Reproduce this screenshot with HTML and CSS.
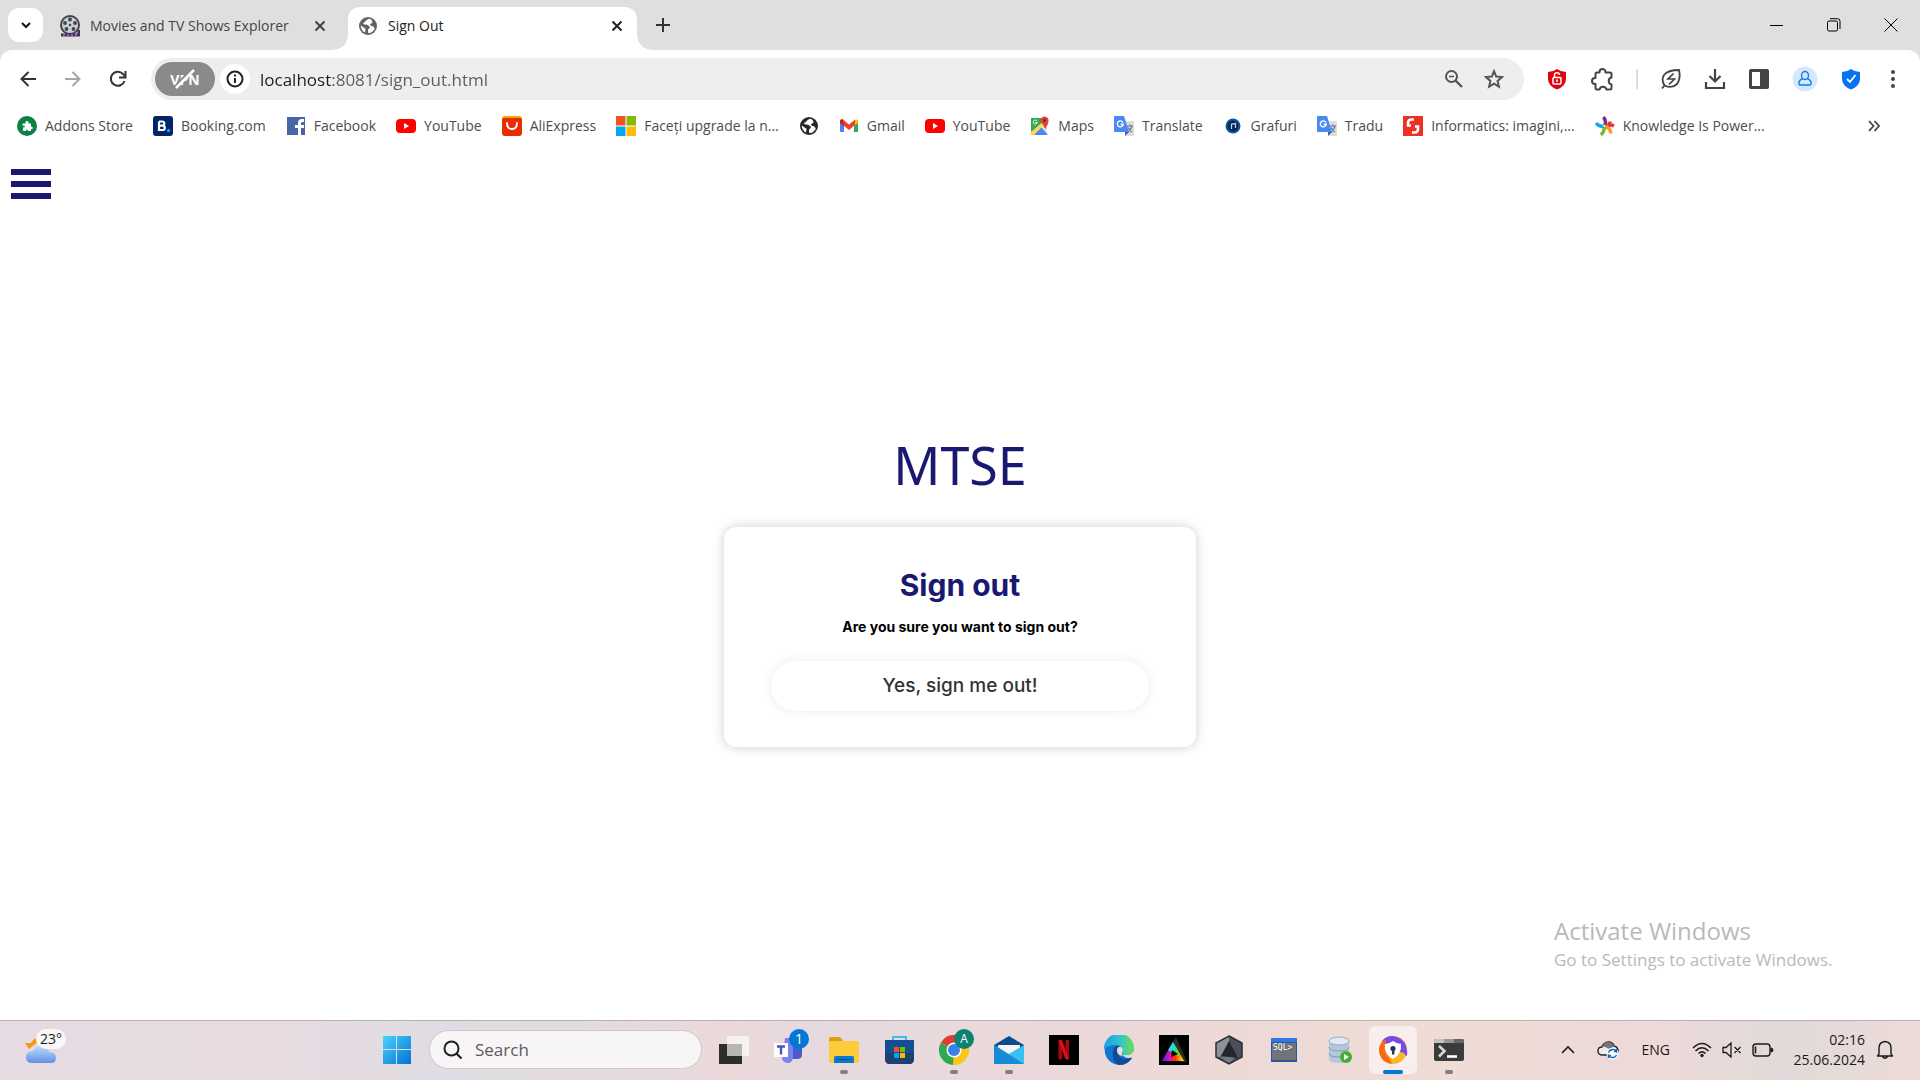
FILE: index.html
```html
<!DOCTYPE html>
<html lang="en">
<head>
<meta charset="utf-8">
<title>Sign Out</title>
<link rel="stylesheet" href="styles.css">
</head>
<body>
<svg class="defs" width="0" height="0" aria-hidden="true">
  <defs>
    <symbol id="youtube" viewBox="0 0 20 20"><rect y="3" width="20" height="14" rx="4" fill="#f00"/><path d="M8 7l5 3-5 3z" fill="#fff"/></symbol>
    <symbol id="translate" viewBox="0 0 20 20"><path d="M8 5h11q1 0 1 1v13q0 1-1 1h-7z" fill="#dcdcdc"/><path d="M1 0h9l5 16H1q-1 0-1-1V1q0-1 1-1z" fill="#4a89f3"/><path d="M11 16h4l-4 4z" fill="#3761b8"/><path d="M9 6.500A3 3 0 1 0 9.300 8.200H6.700" fill="none" stroke="#fff" stroke-width="1.400"/><path d="M13 10h6M16 8.500V10M18 10q-1 4-4 6M14 11.500q1.500 3 4 4.500" fill="none" stroke="#607988" stroke-width="1.200"/></symbol>
    <symbol id="globe" viewBox="0 0 20 20"><circle cx="10" cy="10" r="9" fill="currentColor"/><path d="M11.500 2.800c-2 .2-2 1.400-3.400 1.700-1.200.3-.7 1.900-2.200 2.100-1 .2-1 1.600.4 1.800 2 .2 3.700-.2 4.300 1.300.3.900 1.300.3 1.400 1.500.1 1.300-1.900 1.300-1.900 2.700 0 1.500-.3 2.100.4 3.200 3-.1 5.700-2.200 6.300-5.100-1-.2-1-1.600-2-1.800-1.700-.2-2.600-.4-2.700-1.600-.1-1.500 2.300-1 2.300-2.700 0-1.100-1.500-2.500-2.900-3.100z" fill="#fff"/><path d="M2.700 9.500l4.800 3.200-.4 3.900c-2.600-1.300-4.300-3.800-4.400-7.100z" fill="#fff"/></symbol>
  </defs>
</svg>

<header class="browser">
  <div class="tabstrip">
    <button class="tab-search" aria-label="Search tabs"><svg width="12" height="12" viewBox="0 0 12 12"><path d="M2 4l4 4 4-4" fill="none" stroke="#111" stroke-width="2"/></svg></button>
    <div class="tab">
      <svg width="20" height="22" viewBox="0 0 20 22"><circle cx="10" cy="10" r="9" fill="#c3d0d8" stroke="#45434c" stroke-width="2"/><g fill="#45434c"><circle cx="10" cy="4.500" r="1.900"/><circle cx="15" cy="8" r="1.900"/><circle cx="13.500" cy="14" r="1.900"/><circle cx="6.500" cy="14" r="1.900"/><circle cx="5" cy="8" r="1.900"/><circle cx="10" cy="10" r="1.300"/></g><path d="M1 20h18v-5" fill="none" stroke="#4a2a62" stroke-width="3"/><path d="M3 20h2m2 0h2m2 0h2m2 0h2" stroke="#d4a4e4"/></svg>
      <span class="tab-title">Movies and TV Shows Explorer</span>
      <button class="tab-close" aria-label="Close tab"><svg width="12" height="12" viewBox="0 0 12 12"><path d="M1.500 1.500l9 9M10.500 1.500l-9 9" stroke="#444" stroke-width="2"/></svg></button>
    </div>
    <div class="tab tab-active">
      <svg class="grey" width="20" height="20"><use href="#globe"/></svg>
      <span class="tab-title">Sign Out</span>
      <button class="tab-close" aria-label="Close tab"><svg width="12" height="12" viewBox="0 0 12 12"><path d="M1.500 1.500l9 9M10.500 1.500l-9 9" stroke="#222" stroke-width="2"/></svg></button>
    </div>
    <button class="new-tab" aria-label="New tab"><svg width="14" height="14" viewBox="0 0 14 14"><path d="M7 0v14M0 7h14" stroke="#333" stroke-width="2"/></svg></button>
    <div class="window-controls">
      <button aria-label="Minimize"><svg width="14" height="14" viewBox="0 0 14 14"><path d="M0 7.500h13" stroke="#000"/></svg></button>
      <button aria-label="Restore"><svg width="14" height="14" viewBox="0 0 14 14"><rect x=".5" y="3" width="10" height="10" rx="1.500" fill="none" stroke="#000"/><path d="M3 .7h7.500q2.500 0 2.500 2.500V11" fill="none" stroke="#000"/></svg></button>
      <button aria-label="Close window"><svg width="14" height="14" viewBox="0 0 14 14"><path d="M.5.5l13 13M13.500.5l-13 13" stroke="#000"/></svg></button>
    </div>
  </div>

  <div class="toolbar">
    <nav class="nav-buttons" aria-label="History">
      <button aria-label="Back"><svg width="18" height="18" viewBox="0 0 18 18"><path d="M17 9H3M9.500 2L2.500 9l7 7" fill="none" stroke="#333" stroke-width="2"/></svg></button>
      <button aria-label="Forward"><svg width="18" height="18" viewBox="0 0 18 18"><path d="M1 9h14M8.500 2l7 7-7 7" fill="none" stroke="#a5a5a5" stroke-width="2"/></svg></button>
      <button aria-label="Reload"><svg width="18" height="18" viewBox="0 0 18 18"><path d="M15.500 11A7 7 0 1 1 14 4l2 2.500" fill="none" stroke="#333" stroke-width="2"/><path d="M16.500 1v6.500H10" fill="none" stroke="#333" stroke-width="2"/></svg></button>
    </nav>
    <div class="address">
      <button class="vpn" aria-label="VPN is off"><span>VPN</span><svg width="26" height="22" viewBox="0 0 26 22"><path d="M3 19L20 1" stroke="#8a8a8a" stroke-width="3"/><path d="M4 20L22 2" stroke="#fff" stroke-width="2.500"/></svg></button>
      <button class="info" aria-label="Site information"><svg width="18" height="18" viewBox="0 0 18 18"><circle cx="9" cy="9" r="7.500" fill="none" stroke="#222" stroke-width="2"/><path d="M9 8v5M9 4.500v2" stroke="#222" stroke-width="2"/></svg></button>
      <input class="url" type="text" aria-label="Address" value="localhost:8081/sign_out.html">
      <button aria-label="Zoom"><svg width="20" height="20" viewBox="0 0 20 20"><circle cx="7.500" cy="7.500" r="5.500" fill="none" stroke="#555" stroke-width="2"/><path d="M11.500 11.500l6.500 6.500" stroke="#555" stroke-width="2.400"/><path d="M5 7.500h5" stroke="#555" stroke-width="1.500"/></svg></button>
      <button aria-label="Bookmark this page"><svg width="20" height="20" viewBox="0 0 20 20"><path d="M10 2.200l2.200 5.400 5.800.5-4.400 3.800 1.300 5.700-4.900-3-4.900 3 1.300-5.700L2 8.100l5.800-.5z" fill="none" stroke="#555" stroke-width="2"/></svg></button>
    </div>
    <div class="extensions">
      <button aria-label="Privacy lock"><svg width="22" height="22" viewBox="0 0 22 22"><path d="M11 1q4 3 9 3v7q0 7-9 10.500Q2 18 2 11V4q5 0 9-3z" fill="#e1040c"/><rect x="7" y="9.500" width="8" height="6.500" rx="1" fill="none" stroke="#fff" stroke-width="1.500"/><path d="M8.500 9V7q0-2.200 2.500-2.200T13.500 7M11 11.500v2.500" fill="none" stroke="#fff" stroke-width="1.500"/></svg></button>
      <button aria-label="Extensions"><svg width="24" height="24" viewBox="0 0 24 24"><path d="M7 5.500H9.500V5a3 3 0 0 1 6 0v.5H20q1.500 0 1.500 1.500v3.500a3.600 3.600 0 0 0 0 7V21q0 1.500-1.500 1.500h-3.500a3.600 3.600 0 0 0-7 0H7Q5.500 22.500 5.500 21v-4H5a3 3 0 0 1 0-6h.5V7q0-1.500 1.500-1.500z" fill="none" stroke="#444" stroke-width="2" stroke-linejoin="round"/></svg></button>
      <span class="divider"></span>
      <button aria-label="Energy saver"><svg width="22" height="22" viewBox="0 0 22 22"><path d="M4.500 17.500Q1 12 4 7q4-5 15-5 2 9-2 14-5 5-12.500 1.500zl-2.500 3" fill="none" stroke="#444" stroke-width="1.800"/><path d="M13.500 5.500L8 11h6.500L9 16.500" fill="none" stroke="#444" stroke-width="1.700"/></svg></button>
      <button aria-label="Downloads"><svg width="22" height="22" viewBox="0 0 22 22"><path d="M11 1v12M5.500 8L11 13.500 16.500 8M2 14v6h18v-6" fill="none" stroke="#444" stroke-width="2.200"/></svg></button>
      <button aria-label="Side panel"><svg width="22" height="22" viewBox="0 0 22 22"><rect x="1" y="1" width="20" height="20" rx="2" fill="#444"/><path d="M4 4h8v14H4z" fill="#fff"/></svg></button>
      <button aria-label="Profile"><svg width="26" height="26" viewBox="0 0 26 26"><circle cx="13" cy="13" r="12.500" fill="#d7e8fd"/><ellipse cx="13" cy="9.500" rx="3.500" ry="4" fill="none" stroke="#0b7af5" stroke-width="1.400"/><path d="M10.500 13q-4 1-3.500 5 0 1 1 1h10q1 0 1-1 .5-4-3.500-5" fill="none" stroke="#0b7af5" stroke-width="1.400"/></svg></button>
      <button aria-label="Security"><svg width="22" height="22" viewBox="0 0 22 22"><path d="M11 1q4 3 9 3v7q0 7-9 10.500Q2 18 2 11V4q5 0 9-3z" fill="#0872f5"/><path d="M7 11l3 3 5.500-7" fill="none" stroke="#fff" stroke-width="1.800"/></svg></button>
      <button class="overflow" aria-label="Menu"><svg width="6" height="20" viewBox="0 0 6 20"><circle cx="3" cy="3" r="2" fill="#444"/><circle cx="3" cy="10" r="2" fill="#444"/><circle cx="3" cy="17" r="2" fill="#444"/></svg></button>
    </div>
  </div>

  <nav class="bookmarks" aria-label="Bookmarks">
    <a href="#"><svg width="20" height="20" viewBox="0 0 20 20"><circle cx="10" cy="10" r="10" fill="#0e8043"/><path d="M5.500 7.500h3q-.5-2.500 1.500-2.500t1.500 2.500H14v3q2 .5 2 1.500t-2 1v2h-3q0-1.500-1-1.500T9 15H6v-3.500q2 0 2-1t-2.500-1z" fill="#fff"/></svg><span>Addons Store</span></a>
    <a href="#"><svg width="20" height="20" viewBox="0 0 20 20"><rect width="20" height="20" rx="3" fill="#02246b"/><path d="M6 5.500h3q2.300 0 2.300 2T9 9.700h-3m0 0h3.200q2.600 0 2.600 2.200T9 14H6zV5.500" fill="none" stroke="#fff" stroke-width="2.200"/><circle cx="15.500" cy="14.500" r="1.500" fill="#21b4ed"/></svg><span>Booking.com</span></a>
    <a href="#"><svg width="20" height="20" viewBox="0 0 20 20"><path d="M1 1h18v18H1z" fill="#4765a7"/><path d="M12 19v-7H9V9h3V7q0-4 4-4h2v3h-1.500Q15 6 15 7.500V9h3v3h-3v7z" fill="#fff"/></svg><span>Facebook</span></a>
    <a href="#"><svg width="20" height="20"><use href="#youtube"/></svg><span>YouTube</span></a>
    <a href="#"><svg width="20" height="20" viewBox="0 0 20 20"><rect width="20" height="12" rx="3" fill="#ff9c00"/><path d="M0 3q1-1 3-1h14q2 0 3 1v14q0 3-3 3H3q-3 0-3-3z" fill="#e62e04"/><path d="M5 7q0 6 5 6t5-6" fill="none" stroke="#fff" stroke-width="1.800" stroke-linecap="round"/></svg><span>AliExpress</span></a>
    <a href="#"><svg width="20" height="20" viewBox="0 0 20 20"><path d="M0 0h9.500v9.500H0z" fill="#f35325"/><path d="M10.500 0H20v9.500h-9.500z" fill="#81bc06"/><path d="M0 10.500h9.500V20H0z" fill="#05a6f0"/><path d="M10.500 10.500H20V20h-9.500z" fill="#ffba08"/></svg><span>Faceți upgrade la n...</span></a>
    <a href="#" aria-label="Untitled bookmark"><svg class="dark" width="20" height="20"><use href="#globe"/></svg></a>
    <a href="#"><svg width="20" height="20" viewBox="0 0 20 20"><path d="M1 5l4 3v8H2q-1 0-1-1z" fill="#4285f4"/><path d="M19 5l-4 3v8h3q1 0 1-1z" fill="#34a853"/><path d="M15 5l2-1.500q2-.5 2 2V7l-4 3z" fill="#fbbc04"/><path d="M1 7V5.500q0-3 3-2l6 5 6-5V9l-6 5-5-4z" fill="#ea4335"/><path d="M1 5q.5-2.500 3-1.500L5 10 1 7z" fill="#c5221f"/></svg><span>Gmail</span></a>
    <a href="#"><svg width="20" height="20"><use href="#youtube"/></svg><span>YouTube</span></a>
    <a href="#"><svg width="20" height="20" viewBox="0 0 20 20"><path d="M1 2h16v17H1z" fill="#dfe2e6"/><path d="M1 2h12v7l-12 10z" fill="#34a853"/><path d="M2 19l8-9 8 9z" fill="#4a89f3"/><path d="M1 16L15 4l2 2L4 19H1z" fill="#fdd65b"/><path d="M15 13q-1-3-2.500-5a4 4 0 1 1 6-3q0 3-3.500 8z" fill="#db4437"/><circle cx="14.500" cy="4.500" r="1.500" fill="#7b231e"/><path d="M7 5a2 2 0 1 0 .3 1.500H5.500" fill="none" stroke="#fff"/></svg><span>Maps</span></a>
    <a href="#"><svg width="20" height="20"><use href="#translate"/></svg><span>Translate</span></a>
    <a href="#"><svg width="20" height="20" viewBox="0 0 20 20"><circle cx="10" cy="10" r="7.500" fill="#0b58ad"/><circle cx="10" cy="10" r="5.500" fill="#0a2350"/><path d="M8.500 13V8l4-.5V12" fill="none" stroke="#c0d0ea" stroke-width="1.300"/></svg><span>Grafuri</span></a>
    <a href="#"><svg width="20" height="20"><use href="#translate"/></svg><span>Tradu</span></a>
    <a href="#"><svg width="20" height="20" viewBox="0 0 20 20"><path d="M0 0h20v20H0z" fill="#ee2f24"/><path d="M11 3.500H8.500Q5 3.500 5 7v2.500h3M9 16.500h2.500q3.500 0 3.500-3.500v-2.500h-3" fill="none" stroke="#fff" stroke-width="2.600"/></svg><span>Informatics: imagini,...</span></a>
    <a href="#"><svg width="20" height="20" viewBox="0 0 20 20" fill="none" stroke-width="3.500"><path d="M9.500 9Q12 6 8.500 1" stroke="#7a2e94"/><path d="M11 9.500q4 1 4-4" stroke="#e8343c"/><path d="M11 10q4-2 8 0" stroke="#e8343c"/><path d="M10 10.500q5 1 6 7" stroke="#f5a11d"/><path d="M9 11q1 4-3 8" stroke="#7cb92f"/><path d="M8.500 10Q4 11 1 7" stroke="#20a7dd"/></svg><span>Knowledge Is Power...</span></a>
    <button class="more" aria-label="More bookmarks"><svg width="12" height="12" viewBox="0 0 12 12"><path d="M1 1l4.500 5L1 11M6.500 1L11 6l-4.500 5" fill="none" stroke="#444" stroke-width="1.800"/></svg></button>
  </nav>
</header>

<main class="page">
  <button class="menu" aria-label="Open menu"><span></span><span></span><span></span></button>
  <section class="signout">
    <h1>MTSE</h1>
    <div class="card">
      <h2>Sign out</h2>
      <p>Are you sure you want to sign out?</p>
      <button class="confirm">Yes, sign me out!</button>
    </div>
  </section>
  <aside class="activate"><strong>Activate Windows</strong><span>Go to Settings to activate Windows.</span></aside>
</main>

<footer class="taskbar">
  <div class="weather">
    <svg width="32" height="30" viewBox="0 0 32 30"><defs><linearGradient id="cl" x2="0" y2="1"><stop stop-color="#b8dafd"/><stop offset="1" stop-color="#6593e4"/></linearGradient></defs><path d="M12 3l1 4-9 7-4-6h6q2-4 6-5z" fill="#f39a1c"/><path d="M7 28q-6 0-6-6t7-6q3-6 9-5t7 6q7 0 7 6 0 5-5 5z" fill="url(#cl)"/></svg>
    <span class="temp">23°</span>
  </div>
  <div class="apps">
    <button aria-label="Start"><svg width="30" height="30" viewBox="0 0 30 30"><defs><linearGradient id="win" x2="1" y2="1"><stop stop-color="#4cd2fd"/><stop offset="1" stop-color="#0073d4"/></linearGradient></defs><path d="M1 1h13v13H1zM15 1h14v13H15zM1 15h13v14H1zM15 15h14v14H15z" fill="url(#win)"/></svg></button>
    <label class="search"><svg width="20" height="20" viewBox="0 0 20 20"><circle cx="8.500" cy="8.500" r="7" fill="none" stroke="#222" stroke-width="2"/><path d="M13.500 13.500l5 5" stroke="#222" stroke-width="2.200"/></svg><input type="search" placeholder="Search" aria-label="Search"></label>
    <button aria-label="Task view"><svg width="30" height="30" viewBox="0 0 30 30"><path d="M0 9h23v20H0z" fill="#2d2d2b"/><path d="M8 1h22v20H8z" fill="#f7f7f5" opacity=".85"/><path d="M8 9h15v12H8z" fill="#b6b6b4"/></svg></button>
    <button aria-label="Teams"><svg width="34" height="34" viewBox="0 0 34 34"><path d="M18 12h12v10q0 4-5 4h-7z" fill="#5059c9"/><path d="M13 5h8v20q-1 5-5 5t-6-4z" fill="#7b83eb"/><path d="M2 10h14v14H2z" fill="#fff"/><path d="M5 13.500h8M9 13.500v8" stroke="#4b53bc" stroke-width="2.400"/></svg><span class="badge badge-blue">1</span></button>
    <button class="running" aria-label="File Explorer"><svg width="30" height="30" viewBox="0 0 30 30"><path d="M0 4q0-2 2-2h9l3 4v6H0z" fill="#dda009"/><path d="M2 6h26q2 0 2 2v18q0 2-2 2H2q-2 0-2-2V7z" fill="#fecb3a"/><path d="M5 28v-5q0-2 2-2h16q2 0 2 2v5z" fill="#0b78d0"/><path d="M8 24.500h14" stroke="#05508f"/></svg></button>
    <button aria-label="Microsoft Store"><svg width="30" height="30" viewBox="0 0 30 30"><path d="M9 6V2h13v4" fill="none" stroke="#35c2f1" stroke-width="2"/><path d="M1 5h29v19q0 5-5 5H6q-5 0-5-5z" fill="#124f96"/><path d="M1 18h29v6q0 5-5 5H6q-5 0-5-5z" fill="#20406f"/><path d="M10 12h5v5h-5z" fill="#f25022"/><path d="M16 12h5v5h-5z" fill="#7fba00"/><path d="M10 18h5v5h-5z" fill="#00a4ef"/><path d="M16 18h5v5h-5z" fill="#ffb900"/></svg></button>
    <button class="running" aria-label="Chrome"><svg width="30" height="30" viewBox="0 0 30 30"><path d="M15 15L2 7.500A15 15 0 0 1 28 7.500z" fill="#e33b2e"/><path d="M15 15V30A15 15 0 0 1 2 7.500z" fill="#2da94f"/><path d="M15 15L28 7.500A15 15 0 0 1 14 30z" fill="#fdc61b"/><path d="M15 8h13.300v3H15z" fill="#fdc61b"/><circle cx="15" cy="15" r="7.500" fill="#fff"/><circle cx="15" cy="15" r="6" fill="#3880ee"/></svg><span class="badge badge-green">A</span></button>
    <button class="running" aria-label="Mail"><svg width="30" height="30" viewBox="0 0 30 30"><path d="M0 10l15-9 15 9v8H0z" fill="#0c4b8d"/><path d="M4 10h22v14H4z" fill="#f4f4f4"/><path d="M0 10l15 9 15-9v18q0 1-1 1H1q-1 0-1-1z" fill="#36c1f2"/><path d="M0 10l30 19H1q-1 0-1-1z" fill="#168bd8"/></svg></button>
    <button aria-label="Netflix"><svg width="30" height="30" viewBox="0 0 30 30"><path d="M0 0h30v30H0z" fill="#000"/><path d="M9.500 5H13v19l-3.500.5zM16.500 5H20v19.500l-3.500-.5z" fill="#a8060f"/><path d="M9.500 5H13l7 19.500-3.700-.5z" fill="#e50914"/></svg></button>
    <button aria-label="Edge"><svg width="30" height="30" viewBox="0 0 30 30"><defs><linearGradient id="edge" x2="1"><stop stop-color="#1b9de2"/><stop offset=".55" stop-color="#34c6c9"/><stop offset="1" stop-color="#6bdf52"/></linearGradient></defs><path d="M15 0a15 15 0 0 1 15 13q0 6-7 7-5 0-4.500-2.500 0 6 8.500 5.500l1 .5A15 15 0 1 1 15 0z" fill="#0c78cf"/><path d="M0 14A15 15 0 0 1 30 13q0 7-7 7-6 0-5-3 2-4-2-6Q8 8 0 14z" fill="url(#edge)"/><path d="M9 15q2-5 7-4-4 2-3 6 2 7 9 7 3 0 6-2-4 8-13 8-8-3-6-15z" fill="#114a99"/><path d="M16 11.500q4.500 2 2 5.500-1 2.500 1 4-5-.5-6-4.500-.5-4 3-5z" fill="#efdcdb"/></svg></button>
    <button aria-label="Prism"><svg width="30" height="30" viewBox="0 0 30 30"><defs><linearGradient id="tri" x2="1"><stop stop-color="#5a18ff"/><stop offset=".35" stop-color="#e010c0"/><stop offset=".6" stop-color="#f30"/><stop offset="1" stop-color="#ff0"/></linearGradient></defs><path d="M0 0h30v30H0z" fill="#000"/><path d="M17 2l11 25h-6L14 7z" fill="#2b2b2b"/><path d="M14 7l11 19H3z" fill="url(#tri)"/><path d="M14 7l4 7-3 4-6-3z" fill="#19e5d2"/><path d="M17 12l5 9-6-1z" fill="#63dd21"/><path d="M13 15l6 4-7 3z" fill="#000"/></svg></button>
    <button aria-label="Hexagon app"><svg width="30" height="30" viewBox="0 0 30 30"><path d="M15 1l13 7v14l-13 7-13-7V8z" fill="#495059"/><path d="M15 1v9L6 22l-4 0V8z" fill="#8b929b"/><path d="M15 29L6 22l16-1z" fill="#717983"/><path d="M15 6l9 17-17-2z" fill="#23262b"/><path d="M15 1l13 7v14l-13 7-13-7V8z" fill="none" stroke="#2b2e33" stroke-width="1.500"/></svg></button>
    <button aria-label="SQL"><svg width="30" height="30" viewBox="0 0 30 30"><path d="M2 3h26v24H2z" fill="#28569f"/><path d="M2 3h26v4H2z" fill="#2d78e6"/><path d="M3 8h24v17H3z" fill="#707478"/><text x="4" y="15" class="sql">SQL&gt;</text></svg></button>
    <button aria-label="Database"><svg width="30" height="30" viewBox="0 0 30 30"><path d="M5 6v18q0 4 10 4t10-4V6z" fill="#b3c8de"/><path d="M5 12q0 4 10 4t10-4M5 18q0 4 10 4t10-4" fill="none" stroke="#8099b5"/><ellipse cx="15" cy="6" rx="10" ry="4" fill="#dfeaf4" stroke="#92abc4"/><circle cx="22" cy="22" r="6" fill="#43b02a"/><path d="M20 19l5 3-5 3z" fill="#fff"/></svg></button>
    <button class="current" aria-label="Secure Browser"><svg width="30" height="30" viewBox="0 0 30 30"><circle cx="15" cy="15" r="14" fill="#f8b62a"/><path d="M15 15L4 6Q10-1 19 2t10 13-3 3z" fill="#7c49e5"/><path d="M6 5q-7 7-4 15t12 9l-3-6Q4 16 8 5z" fill="#fa671b"/><path d="M15 6q4 3 8 3 1 10-8 15-9-5-8-15 4 0 8-3z" fill="#fff"/><circle cx="15" cy="13.500" r="2.600" fill="#27305b"/><path d="M14 14h2.400v5.500H14z" fill="#27305b"/></svg></button>
    <button class="running" aria-label="Terminal"><svg width="30" height="30" viewBox="0 0 30 30"><rect y="4" width="30" height="22" rx="2" fill="#3b3b3b"/><path d="M0 6q0-2 2-2h8v4H0z" fill="#c4c4c4"/><path d="M10 4h10v4H10z" fill="#969696"/><path d="M20 4h8q2 0 2 2v2H20z" fill="#666"/><path d="M5 11l5.500 5L5 21.500" fill="none" stroke="#d8d8d8" stroke-width="2.600"/><path d="M13 21.500h10" stroke="#fff" stroke-width="2.600"/></svg></button>
  </div>
  <div class="tray">
    <button aria-label="Hidden icons"><svg width="16" height="10" viewBox="0 0 16 10"><path d="M2 8l6-6 6 6" fill="none" stroke="#1b1b1b" stroke-width="1.600"/></svg></button>
    <button class="cloud" aria-label="OneDrive"><svg width="22" height="20" viewBox="0 0 22 20"><path d="M6 15q-5 0-5-4t4-4q1-4 6-5 5 0 6 4 4 1 4 5-1 4-4 4z" fill="#ececec" stroke="#222" stroke-width="1.400"/><path d="M5 7q2-5 6-5t6 4q-3 5-7 2-2-2-5-1z" fill="#757575"/><circle cx="15.500" cy="13.500" r="6" fill="#fff"/><path d="M11.500 12.500q1.500-3.500 5-3 2 .3 3 2V9m0 2.500H17M19.500 15q-1.500 3-5 2.500-2-.3-3-2V18m0-2.500H14" fill="none" stroke="#1068c4" stroke-width="1.400"/></svg></button>
    <button class="lang">ENG</button>
    <button class="status" aria-label="Network, sound and battery"><svg width="20" height="16" viewBox="0 0 20 16" fill="none" stroke="#1b1b1b" stroke-width="1.500"><path d="M1 6q9-9 18 0M3.500 9q6.500-6.500 13 0M6.500 11.500q3.500-3.500 7 0"/><circle cx="10" cy="13.500" r="1.300" fill="#1b1b1b" stroke-width="1"/></svg><svg width="20" height="16" viewBox="0 0 20 16" fill="none" stroke="#1b1b1b" stroke-width="1.300"><path d="M1 5.500h3L9 1v14l-5-4.500H1zM12.500 5l6 6M18.500 5l-6 6"/></svg><svg width="22" height="16" viewBox="0 0 22 16"><rect x="1" y="2" width="17" height="12" rx="3" fill="none" stroke="#1b1b1b" stroke-width="1.400"/><path d="M3.500 4.500v7" stroke="#1b1b1b" stroke-width="1.600"/><path d="M19 6q2 0 2 2t-2 2z" fill="#1b1b1b" stroke="#1b1b1b"/></svg></button>
    <button class="clock"><time>02:16</time><time>25.06.2024</time></button>
    <button aria-label="Notifications"><svg width="18" height="20" viewBox="0 0 18 20"><path d="M3 14V8q0-6 6-6.500 6 .5 6 6.500v6l1.500 2h-15zM6.500 16.500q2.500 3.500 5 0" fill="none" stroke="#1b1b1b" stroke-width="1.400" stroke-linejoin="round"/></svg></button>
  </div>
</footer>
</body>
</html>
```
FILE: styles.css
```css
* { box-sizing: border-box; }

body {
  margin: 0;
  min-height: 100vh;
  display: flex;
  flex-direction: column;
  background: #fff;
  font-family: "Open Sans", "Noto Sans", sans-serif;
  font-size: 14px;
  color: #1b1b1b;
}

button {
  display: flex;
  align-items: center;
  justify-content: center;
  margin: 0;
  padding: 0;
  border: 0;
  background: none;
  color: inherit;
  font: inherit;
}

input { border: 0; outline: 0; background: none; padding: 0; min-width: 0; font: inherit; }
svg { display: block; flex: none; }
.defs { position: absolute; }

/* Browser chrome */
.browser { background: #dfdfdf; }
.tabstrip { display: flex; align-items: center; height: 50px; padding: 0 1px 0 8px; }
.tab-search { width: 35px; height: 34px; border-radius: 11px; background: #fff; }
.tab {
  display: flex;
  align-items: center;
  gap: 10px;
  width: 289px;
  height: 43px;
  margin-top: 7px;
  padding: 0 14px 6px 10px;
  color: #444;
}
.tab:not(.tab-active) { width: 305px; padding: 0 22px 6px 17px; }
.tab-title { flex: 1; white-space: nowrap; }
.tab-active {
  position: relative;
  border-radius: 12px 12px 0 0;
  background: #fff;
  color: #222;
}
.tab-active::before,
.tab-active::after {
  content: "";
  position: absolute;
  bottom: 0;
  width: 14px;
  height: 14px;
}
.tab-active::before { right: 100%; background: radial-gradient(circle at 0 0, transparent 13px, #fff 14px); }
.tab-active::after { left: 100%; background: radial-gradient(circle at 100% 0, transparent 13px, #fff 14px); }
.grey { color: #5f6368; }
.dark { color: #27282b; }
.new-tab { width: 52px; height: 34px; }
.window-controls { display: flex; margin-left: auto; }
.window-controls button { width: 57px; height: 50px; }

.toolbar {
  display: flex;
  align-items: center;
  height: 58px;
  padding-right: 24px;
  border-radius: 12px 12px 0 0;
  background: #fff;
}
.nav-buttons { display: flex; gap: 27px; padding: 0 24px 0 19px; }
.address {
  flex: 1;
  display: flex;
  align-items: center;
  gap: 20px;
  height: 42px;
  padding: 0 20px 0 4px;
  border-radius: 21px;
  background: #efedee;
}
.vpn {
  position: relative;
  width: 60px;
  height: 34px;
  margin-right: -15px;
  border-radius: 17px;
  background: #8a8a8a;
  color: #fff;
  font-size: 14px;
  font-weight: 700;
}
.vpn svg { position: absolute; }
.info { width: 30px; height: 30px; margin-right: -10px; border-radius: 15px; background: #fff; }
.url {
  flex: 1;
  font-size: 17px;
  background: linear-gradient(90deg, #1d1d1d 73px, #5c5c5c 73px) text;
  color: transparent;
}
.extensions { display: flex; align-items: center; gap: 22px; padding-left: 22px; }
.overflow { margin-left: 6px; }
.divider { width: 2px; height: 20px; background: #dcdcdc; }

.bookmarks {
  display: flex;
  align-items: center;
  gap: 20px;
  height: 35px;
  padding: 0 40px 0 17px;
  background: #fff;
}
.bookmarks a {
  display: flex;
  align-items: center;
  gap: 8px;
  color: #4d4d4d;
  text-decoration: none;
  white-space: nowrap;
}
.more { margin-left: auto; }

/* Sign-out page */
.page {
  position: relative;
  flex: 1;
  display: grid;
  padding: 14px 11px 7px;
  font-family: Inter, "Open Sans", sans-serif;
}
.menu {
  grid-area: 1 / 1;
  place-self: start;
  flex-direction: column;
  gap: 6px;
  width: 40px;
  padding: 12px 0;
}
.menu span { width: 100%; height: 6px; background: #191970; }
.signout {
  grid-area: 1 / 1;
  place-self: center;
  display: flex;
  flex-direction: column;
  align-items: center;
  gap: 22px;
  width: 472px;
  max-width: 100%;
  text-align: center;
}
.signout h1 {
  margin: 0;
  color: #191970;
  font-family: "Noto Sans", sans-serif;
  font-size: 52px;
  font-weight: 400;
  line-height: 81px;
}
.card {
  width: 100%;
  padding: 36px 47px;
  border-radius: 12px;
  box-shadow: 0 0 12px rgba(0, 0, 0, 0.2);
}
.card h2 { margin: 0; color: #191970; font-size: 30px; font-weight: 700; line-height: 44px; }
.card p { margin: 10px 0 24px; color: #000; font-size: 14px; font-weight: 700; line-height: 20px; }
.confirm {
  width: 100%;
  height: 50px;
  border-radius: 25px;
  background: #fff;
  box-shadow: 0 0 12px rgba(0, 0, 0, 0.08);
  color: #333;
  font-size: 19px;
  font-weight: 500;
}
.activate {
  position: absolute;
  right: 82px;
  bottom: 48px;
  display: flex;
  flex-direction: column;
  width: 284px;
  color: #b9b9b9;
  font-family: "Open Sans", sans-serif;
  font-size: 17px;
  line-height: 24px;
  white-space: nowrap;
}
.activate strong { font-size: 24px; font-weight: 400; line-height: 34px; }

/* Taskbar */
.taskbar {
  display: flex;
  height: 60px;
  padding-bottom: 2px;
  border-top: 1px solid #b5afb0;
  background: linear-gradient(90deg, #e6dbe2, #e7dbe1 14%, #e1dce3 22%, #e2dce2 30%, #ebd9da 38%, #e6dae0 42%, #ecd9d8 60%, #efdcd5 75%, #eddad9 86%, #e1dad8 93%, #eddbd9);
}
.weather { position: relative; width: 369px; padding: 14px 25px; }
.temp {
  position: absolute;
  top: 8px;
  left: 36px;
  width: 30px;
  border-radius: 10px;
  background: #faf7f7;
  line-height: 20px;
  text-align: center;
}
.apps { display: flex; align-items: center; }
.apps button { position: relative; width: 55px; height: 48px; }
.search {
  display: flex;
  align-items: center;
  gap: 12px;
  width: 273px;
  height: 39px;
  margin: 0 4px 0 5px;
  padding: 0 13px;
  border: 1px solid #cfc6cb;
  border-radius: 20px;
  background: #f8f5f7;
  font-size: 17px;
}
.search input { flex: 1; }
.search input::placeholder { color: #5d5a5d; opacity: 1; }
.badge {
  position: absolute;
  top: 3px;
  right: 7px;
  width: 20px;
  border-radius: 10px;
  color: #fff;
  font-size: 14px;
  line-height: 20px;
  text-align: center;
}
.badge-blue { background: #0078d4; }
.badge-green { background: #0b8272; font-size: 12px; }
.running::after,
.current::after {
  content: "";
  position: absolute;
  bottom: 0;
  width: 8px;
  height: 4px;
  border-radius: 2px;
  background: #857d7d;
}
.apps .current { width: 48px; margin: 0 4px 0 3px; border-radius: 6px; background: #f8efed; }
.current::after { width: 20px; background: #0078d4; }
.sql { font: 8px "DejaVu Sans Mono", monospace; fill: #fff; }
.tray { display: flex; align-items: center; margin-left: auto; padding-right: 26px; }
.cloud { margin: 0 23px 0 21px; }
.lang { margin-right: 22px; }
.status { gap: 10px; }
.clock { flex-direction: column; align-items: flex-end; width: 91px; margin-right: 11px; line-height: 20px; }
```
